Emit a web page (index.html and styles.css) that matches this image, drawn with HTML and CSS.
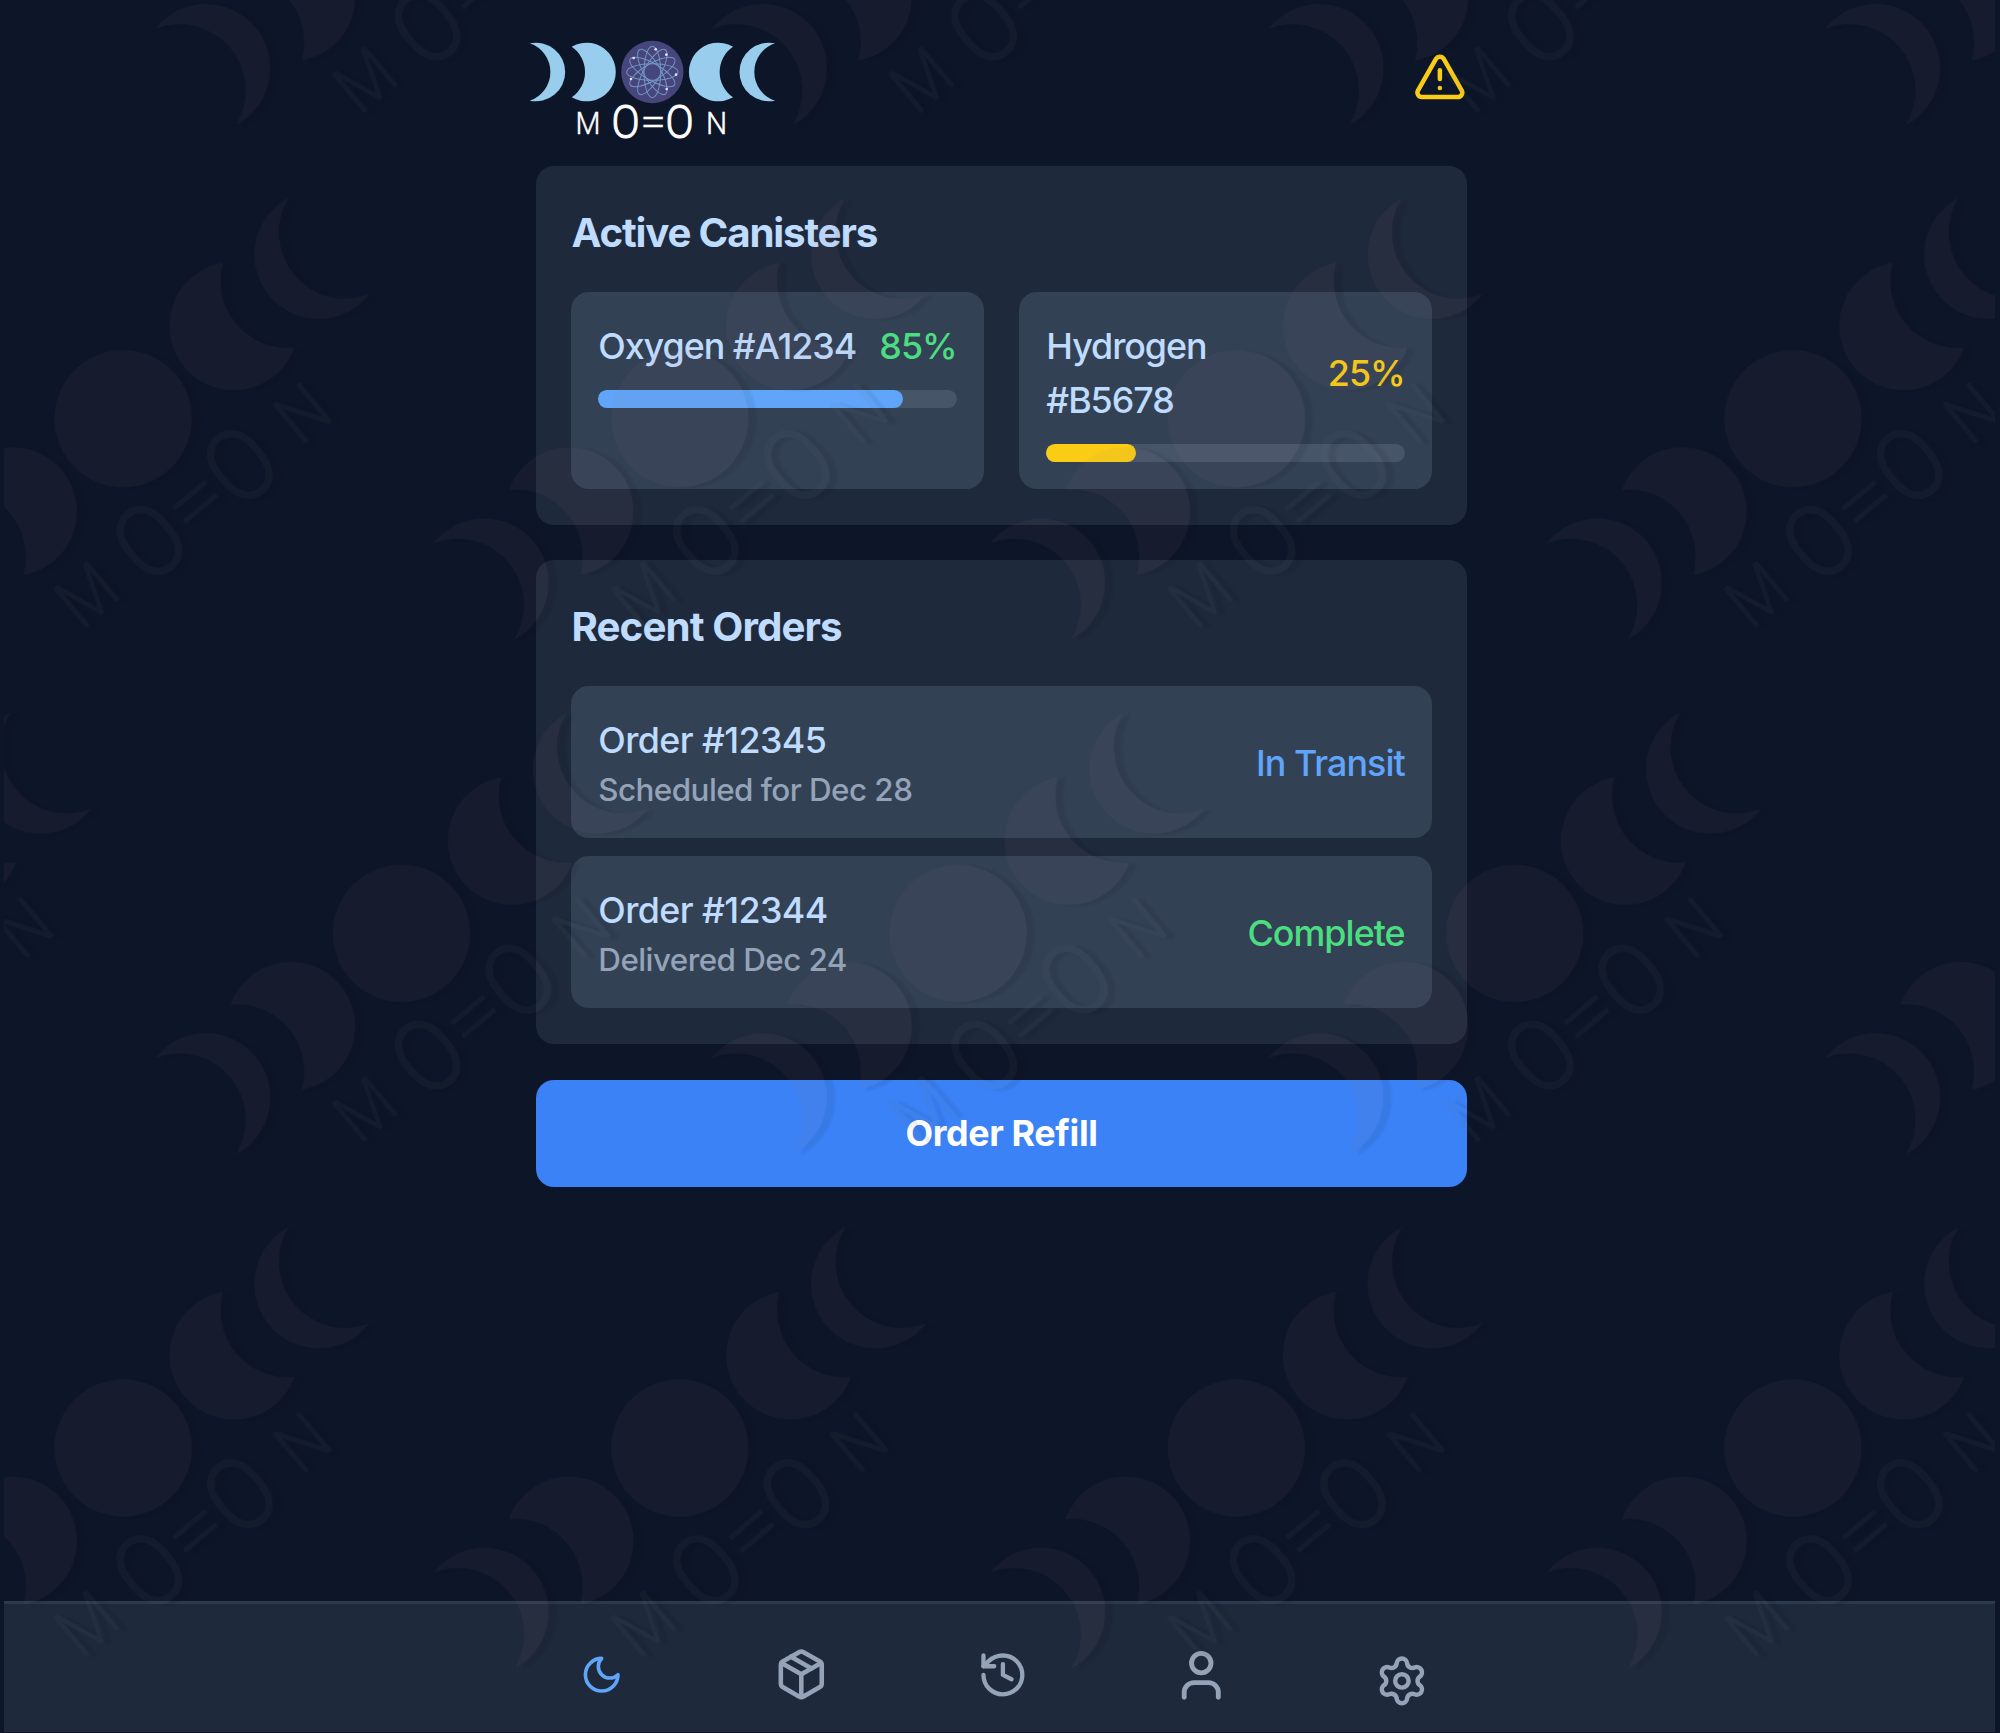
FILE: index.html
```html
<!DOCTYPE html>
<html lang="en">
<head>
<meta charset="utf-8">
<title>MO=ON</title>
<link rel="stylesheet" href="styles.css">
</head>
<body>
<svg class="defs" aria-hidden="true">
  <defs>
    <g id="phases">
      <path d="M-368 -86A88 88 0 1 1 -368 86A90.6 90.6 0 0 0 -368 -86Z"/>
      <path d="M-242 -76A88 88 0 1 1 -242 76A92 92 0 0 0 -242 -76Z"/>
      <path d="M242 -76A88 88 0 1 0 242 76A92 92 0 0 1 242 -76Z"/>
      <path d="M368 -86A88 88 0 1 0 368 86A90.6 90.6 0 0 1 368 -86Z"/>
    </g>
    <g id="wordmark" class="word">
      <text class="word-small" transform="translate(-193 186) scale(.9 1)">M</text>
      <text class="word-big" transform="translate(-80 199) scale(.91 1)">O</text>
      <text class="word-eq" transform="translate(2 189) scale(1.2 1)">=</text>
      <text class="word-big" transform="translate(82 199) scale(.91 1)">O</text>
      <text class="word-small" transform="translate(193 186) scale(.93 1)">N</text>
    </g>
    <g id="mark" transform="rotate(-40) scale(.7305)">
      <g class="mark-moon"><use href="#phases"/><circle r="94"/></g>
      <g class="mark-word"><use href="#wordmark"/></g>
    </g>
  </defs>
</svg>

<div class="app">
  <main class="container">
    <header class="header">
      <svg class="logo" viewBox="-370 -96 740 302" role="img" aria-label="MO=ON">
        <use class="logo-moon" href="#phases"/>
        <circle class="logo-disc" r="93.5"/>
        <g class="logo-orbits">
          <ellipse rx="77" ry="25"/>
          <ellipse rx="77" ry="25" transform="rotate(30)"/>
          <ellipse rx="77" ry="25" transform="rotate(60)"/>
          <ellipse rx="77" ry="25" transform="rotate(90)"/>
          <ellipse rx="77" ry="25" transform="rotate(120)"/>
          <ellipse rx="77" ry="25" transform="rotate(150)"/>
        </g>
        <g class="logo-dots">
          <circle cx="10" cy="-68" r="4"/><circle cx="42" cy="-52" r="4"/>
          <circle cx="-56" cy="-42" r="4"/><circle cx="71" cy="8" r="4"/>
          <circle cx="-64" cy="21" r="4"/><circle cx="43" cy="51" r="4"/>
        </g>
        <use class="logo-word" href="#wordmark"/>
      </svg>
      <svg class="icon alert" viewBox="0 0 24 24"><path d="m21.73 18-8-14a2 2 0 0 0-3.48 0l-8 14A2 2 0 0 0 4 21h16a2 2 0 0 0 1.73-3Z"/><path d="M12 9v4"/><path d="M12 17h.01"/></svg>
    </header>

    <section class="card">
      <h2 class="card-title canisters-title">Active Canisters</h2>
      <div class="canisters">
        <div class="tile">
          <div class="row"><span class="name canister-name nowrap">Oxygen #A1234</span><span class="status green">85%</span></div>
          <div class="track"><div class="fill fill-blue" style="width:85%"></div></div>
        </div>
        <div class="tile">
          <div class="row"><span class="name canister-name">Hydrogen #B5678</span><span class="status yellow">25%</span></div>
          <div class="track"><div class="fill fill-yellow" style="width:25%"></div></div>
        </div>
      </div>
    </section>

    <section class="card">
      <h2 class="card-title">Recent Orders</h2>
      <div class="orders">
        <div class="tile row">
          <div><div class="name">Order #12345</div><div class="note">Scheduled for Dec 28</div></div>
          <span class="status blue">In Transit</span>
        </div>
        <div class="tile row">
          <div><div class="name">Order #12344</div><div class="note">Delivered Dec 24</div></div>
          <span class="status green">Complete</span>
        </div>
      </div>
    </section>

    <button class="refill">Order Refill</button>
  </main>

  <nav class="nav">
    <div class="nav-items">
      <a class="nav-item active"><svg class="icon i-moon" viewBox="0 0 24 24"><path d="M12 3a6 6 0 0 0 9 9 9 9 0 1 1-9-9Z"/></svg></a>
      <a class="nav-item"><svg class="icon i-package" viewBox="0 0 24 24"><path d="m7.5 4.27 9 5.15"/><path d="M21 8a2 2 0 0 0-1-1.73l-7-4a2 2 0 0 0-2 0l-7 4A2 2 0 0 0 3 8v8a2 2 0 0 0 1 1.73l7 4a2 2 0 0 0 2 0l7-4A2 2 0 0 0 21 16Z"/><path d="m3.3 7 8.7 5 8.7-5"/><path d="M12 22V12"/></svg></a>
      <a class="nav-item"><svg class="icon i-history" viewBox="0 0 24 24"><path d="M3 12a9 9 0 1 0 9-9 9.75 9.75 0 0 0-6.74 2.74L3 8"/><path d="M3 3v5h5"/><path d="M12 7v5l4 2"/></svg></a>
      <a class="nav-item"><svg class="icon i-user" viewBox="0 0 24 24"><path d="M19 21v-2a4 4 0 0 0-4-4H9a4 4 0 0 0-4 4v2"/><circle cx="12" cy="7" r="4"/></svg></a>
      <a class="nav-item"><svg class="icon i-settings" viewBox="0 0 24 24"><path d="M9.671 4.136a2.34 2.34 0 0 1 4.659 0 2.34 2.34 0 0 0 3.319 1.915 2.34 2.34 0 0 1 2.33 4.033 2.34 2.34 0 0 0 0 3.831 2.34 2.34 0 0 1-2.33 4.033 2.34 2.34 0 0 0-3.319 1.915 2.34 2.34 0 0 1-4.659 0 2.34 2.34 0 0 0-3.32-1.915 2.34 2.34 0 0 1-2.33-4.033 2.34 2.34 0 0 0 0-3.831A2.34 2.34 0 0 1 6.35 6.051a2.34 2.34 0 0 0 3.319-1.915"/><circle cx="12" cy="12" r="3"/></svg></a>
    </div>
  </nav>

  <!-- repeating brand watermark above the content -->
  <svg class="watermark" viewBox="4 0 1991 1732" aria-hidden="true">
    <g class="watermark-shadow">
      <use href="#mark" transform="translate(-155 -95.8)"/>
      <use href="#mark" transform="translate(401.5 -95.8)"/>
      <use href="#mark" transform="translate(958.1 -95.8)"/>
      <use href="#mark" transform="translate(1514.7 -95.8)"/>
      <use href="#mark" transform="translate(2071.3 -95.8)"/>
      <use href="#mark" transform="translate(123.2 418.7)"/>
      <use href="#mark" transform="translate(679.8 418.7)"/>
      <use href="#mark" transform="translate(1236.4 418.7)"/>
      <use href="#mark" transform="translate(1793 418.7)"/>
      <use href="#mark" transform="translate(-155 933.4)"/>
      <use href="#mark" transform="translate(401.5 933.4)"/>
      <use href="#mark" transform="translate(958.1 933.4)"/>
      <use href="#mark" transform="translate(1514.7 933.4)"/>
      <use href="#mark" transform="translate(2071.3 933.4)"/>
      <use href="#mark" transform="translate(123.2 1448)"/>
      <use href="#mark" transform="translate(679.8 1448)"/>
      <use href="#mark" transform="translate(1236.4 1448)"/>
      <use href="#mark" transform="translate(1793 1448)"/>
    </g>
  </svg>
</div>
</body>
</html>
```
FILE: styles.css
```css
:root {
  --u: 2.24px;
}

* {
  box-sizing: border-box;
}

body {
  margin: 0;
  background: #0d1628;
  font-family: Inter, "Liberation Sans", sans-serif;
  font-size: calc(16 * var(--u));
  line-height: calc(24 * var(--u));
  color: #bfdbfe;
}

.defs {
  display: block;
  width: 0;
  height: 0;
}

.app {
  position: relative;
  display: flex;
  flex-direction: column;
  width: 1991px;
  height: 1732px;
  margin-left: 4px;
  overflow: hidden;
}

.container {
  display: flex;
  flex: 1;
  flex-direction: column;
  gap: calc(16 * var(--u));
  width: calc(416 * var(--u));
  margin-left: 531.6px;
}

.header {
  display: flex;
  justify-content: space-between;
  align-items: flex-start;
  height: 166.2px;
  margin-bottom: calc(-16 * var(--u));
  padding-top: 39.5px;
}

.logo {
  width: 246.7px;
  height: 100.7px;
  margin-left: -6.6px;
  overflow: visible;
}

.logo-moon { fill: #98cdee; }
.logo-disc { fill: #46467c; }
.logo-orbits { fill: none; stroke: #7fa9d6; stroke-width: 3; opacity: .8; }
.logo-dots { fill: #dfe6f5; }
.logo-word { fill: #fff; stroke: #fff; }

.word {
  font-family: Roboto, "Liberation Sans", sans-serif;
  font-weight: 300;
  text-anchor: middle;
}

.word-small { font-size: 96px; stroke-width: 1.5px; }
.word-big { font-size: 137px; stroke-width: 3px; }
.word-eq { font-size: 116px; stroke-width: 1px; }

.icon {
  display: block;
  fill: none;
  stroke: currentColor;
  stroke-width: 2;
  stroke-linecap: round;
  stroke-linejoin: round;
}

.alert {
  width: calc(24 * var(--u));
  height: calc(24 * var(--u));
  margin: 10px .5px 0 0;
  color: #facc15;
}

.card {
  padding: calc(16 * var(--u));
  border-radius: calc(8 * var(--u));
  background: #1e293b;
}

.card-title {
  margin: 0 0 calc(12 * var(--u));
  font-size: calc(18 * var(--u));
  line-height: calc(28 * var(--u));
  font-weight: 650;
  letter-spacing: -.9px;
}

.canisters-title { letter-spacing: -1.2px; }

.canisters {
  display: grid;
  grid-template-columns: 1fr 1fr;
  gap: calc(16 * var(--u));
}

.orders {
  display: flex;
  flex-direction: column;
  gap: calc(8 * var(--u));
}

.tile {
  padding: calc(12 * var(--u));
  border-radius: calc(8 * var(--u));
  background: #334155;
}

.row {
  display: flex;
  justify-content: space-between;
  align-items: center;
}

.name,
.status,
.note {
  margin-bottom: -1.5px;
  padding-top: 1.5px;
  font-weight: 450;
  letter-spacing: -.6px;
}

.canister-name { letter-spacing: -1.05px; }
.status { letter-spacing: -.95px; }
.nowrap { white-space: nowrap; }

.note {
  font-size: calc(14 * var(--u));
  line-height: calc(20 * var(--u));
  letter-spacing: -.55px;
  color: #94a3b8;
}

.green { color: #4ade80; }
.yellow { color: #facc15; }
.blue { color: #60a5fa; }

.track {
  height: calc(8 * var(--u));
  margin-top: calc(8 * var(--u));
  border-radius: calc(4 * var(--u));
  background: #475569;
}

.fill {
  height: 100%;
  border-radius: inherit;
}

.fill-blue { background: #60a5fa; }
.fill-yellow { background: #facc15; }

.refill {
  padding: calc(12 * var(--u) + .5px) 0 calc(12 * var(--u) - .5px);
  border: 0;
  border-radius: calc(8 * var(--u));
  background: #3b82f6;
  color: #fff;
  font: inherit;
  font-weight: 650;
  letter-spacing: -.35px;
}

.nav {
  height: 131px;
  border-top: 3px solid #2c3a4d;
  background: #1e293b;
}

.nav-items {
  display: grid;
  grid-template-columns: repeat(5, 200px);
  align-items: center;
  height: 100%;
  padding: 14px 0 0 498px;
}

.nav-item {
  display: flex;
  justify-content: center;
  color: #94a3b8;
}

.nav-item.active { color: #60a5fa; }

.i-moon { width: 43.4px; height: 43.4px; }
.i-package { width: 54.6px; height: 54.6px; margin: 0 2px 2px 0; }
.i-history { width: 51.8px; height: 51.8px; margin-left: 1px; }
.i-user { width: 58.5px; height: 58.5px; margin-right: 2px; }
.i-settings { width: 53.8px; height: 53.8px; margin-top: 11px; }

.watermark {
  position: absolute;
  inset: 0;
  width: 1991px;
  height: 1732px;
  opacity: .07;
  pointer-events: none;
}

.watermark-shadow { filter: drop-shadow(8px 1px 1px #000); }
.mark-moon { fill: #947986; }
.mark-word { fill: #70767a; stroke: #70767a; }
```
